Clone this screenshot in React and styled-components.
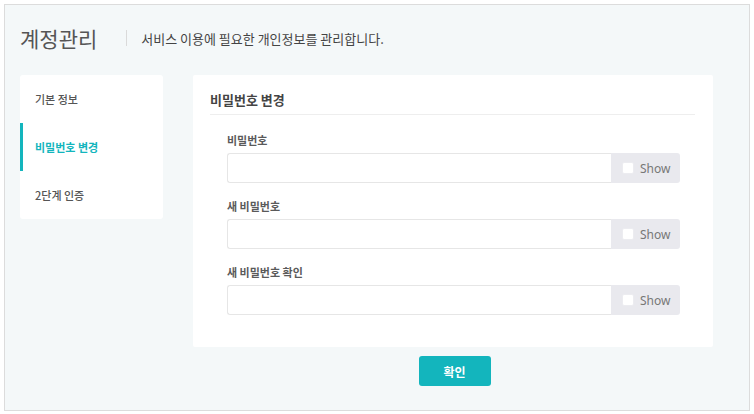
import React from "react";
import styled, { createGlobalStyle } from "styled-components";

const Global = createGlobalStyle`
  html, body { margin: 0; padding: 0; background: #ffffff; }
  body { font-family: "Noto Sans CJK KR", "Noto Sans", sans-serif; }
  * { box-sizing: border-box; }
`;

const Frame = styled.div`
  margin: 4px;
  width: 746px;
  height: 407px;
  border: 1px solid #dcdcdc;
  background: #f4f8f9;
  padding: 0 15px;
`;

const Header = styled.div`
  display: flex;
  align-items: center;
  height: 70px;
  padding-bottom: 4px;
`;

const Title = styled.h1`
  margin: 0;
  font-size: 21px;
  font-weight: 400;
  color: #555;
`;

const Divider = styled.span`
  width: 1px;
  height: 16px;
  background: #dadada;
  margin: 0 14px 0 29px;
`;

const Subtitle = styled.p`
  margin: 0;
  font-size: 13px;
  color: #444;
`;

const Body = styled.div`
  display: flex;
  align-items: flex-start;
  gap: 30px;
`;

const Side = styled.nav`
  width: 143px;
  background: #fff;
  border-radius: 3px;
  display: flex;
  flex-direction: column;
`;

const SideItem = styled.div`
  height: 48px;
  display: flex;
  align-items: center;
  padding-left: ${(p) => (p.$active ? "12px" : "15px")};
  border-left: ${(p) => (p.$active ? "3px solid #13b5bd" : "none")};
  font-size: 11px;
  font-weight: ${(p) => (p.$active ? 700 : 500)};
  color: ${(p) => (p.$active ? "#13b5bd" : "#555")};
`;

const Main = styled.div`
  width: 520px;
  display: flex;
  flex-direction: column;
  align-items: center;
`;

const Card = styled.section`
  width: 100%;
  background: #fff;
  border-radius: 2px;
  padding: 15px 18px 32px 17px;
`;

const CardTitle = styled.h2`
  margin: 0;
  font-size: 13px;
  font-weight: 700;
  color: #444;
  line-height: 20px;
  padding-bottom: 4px;
  border-bottom: 1px solid #eee;
`;

const Fields = styled.div`
  padding: 16px 15px 0 17px;
  display: flex;
  flex-direction: column;
  gap: 14px;
`;

const Field = styled.div`
  display: flex;
  flex-direction: column;
  gap: 4px;
`;

const Label = styled.label`
  font-size: 11px;
  font-weight: 700;
  color: #5a5a5a;
  line-height: 18px;
`;

const Group = styled.div`
  display: flex;
  height: 30px;
`;

const Input = styled.input`
  flex: 1;
  min-width: 0;
  height: 100%;
  border: 1px solid #e6e6e6;
  border-right: none;
  border-radius: 3px 0 0 3px;
  background: #fff;
  outline: none;
  padding: 0 8px;
`;

const Addon = styled.div`
  width: 69px;
  height: 100%;
  background: #e9e9ee;
  border-radius: 0 3px 3px 0;
  display: flex;
  align-items: center;
  padding-left: 11px;
  gap: 6px;
  font-family: "Noto Sans", sans-serif;
  font-size: 12px;
  color: #777;
`;

const Check = styled.span`
  width: 12px;
  height: 12px;
  background: #fff;
  border: 1px solid #ececf0;
  border-radius: 2px;
`;

const Button = styled.button`
  margin-top: 9px;
  margin-left: 3px;
  width: 72px;
  height: 30px;
  border: none;
  border-radius: 3px;
  background: #13b5bd;
  color: #fff;
  font-family: "Noto Sans CJK KR", sans-serif;
  font-size: 12px;
  font-weight: 700;
`;

const fields = ["비밀번호", "새 비밀번호", "새 비밀번호 확인"];

export default function App() {
  return (
    <>
      <Global />
      <Frame>
        <Header>
          <Title>계정관리</Title>
          <Divider />
          <Subtitle>서비스 이용에 필요한 개인정보를 관리합니다.</Subtitle>
        </Header>
        <Body>
          <Side>
            <SideItem>기본 정보</SideItem>
            <SideItem $active>비밀번호 변경</SideItem>
            <SideItem>2단계 인증</SideItem>
          </Side>
          <Main>
            <Card>
              <CardTitle>비밀번호 변경</CardTitle>
              <Fields>
                {fields.map((f) => (
                  <Field key={f}>
                    <Label>{f}</Label>
                    <Group>
                      <Input type="password" />
                      <Addon>
                        <Check />
                        Show
                      </Addon>
                    </Group>
                  </Field>
                ))}
              </Fields>
            </Card>
            <Button>확인</Button>
          </Main>
        </Body>
      </Frame>
    </>
  );
}
